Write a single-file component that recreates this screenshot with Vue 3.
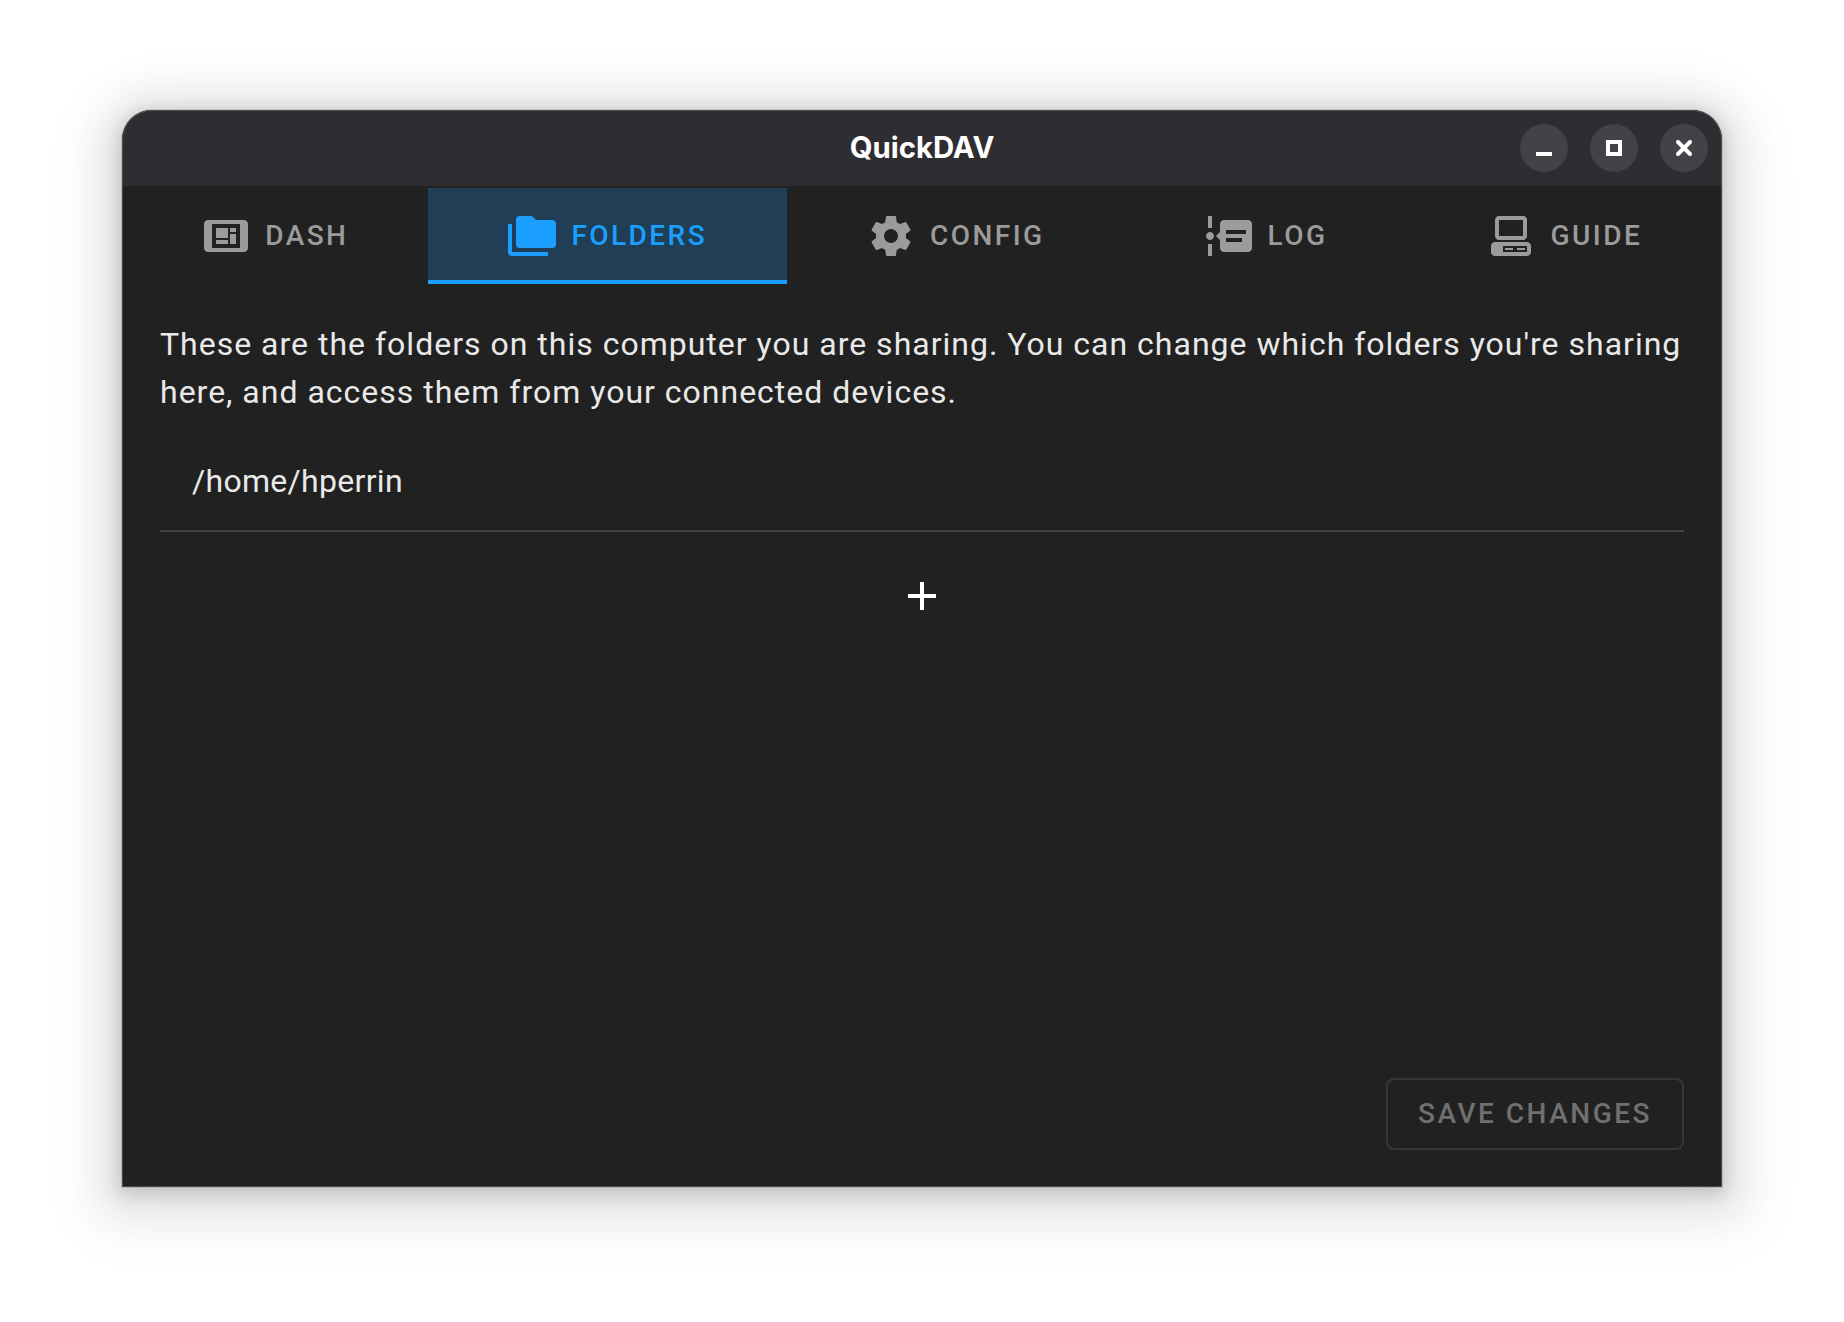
<script setup>
const tabs = [
  { label: 'Dash', icon: 'M7 8H13V13H7V8M7 14H13V16H7V14M14 8H17V10H14V8M14 11H17V16H14V11M21 4H3C1.9 4 1 4.9 1 6V18C1 19.1 1.9 20 3 20H21C22.11 20 23 19.11 23 18V6C23 4.9 22.11 4 21 4M19 18H5V6H19V18Z' },
  { label: 'Folders', active: true, icon: 'M22,4H14L12,2H6A2,2 0 0,0 4,4V16A2,2 0 0,0 6,18H22A2,2 0 0,0 24,16V6A2,2 0 0,0 22,4M2,6H0V20A2,2 0 0,0 2,22H20V20H2V6Z' },
  { label: 'Config', icon: 'M12,15.5A3.5,3.5 0 0,1 8.5,12A3.5,3.5 0 0,1 12,8.5A3.5,3.5 0 0,1 15.5,12A3.5,3.5 0 0,1 12,15.5M19.43,12.97C19.47,12.65 19.5,12.33 19.5,12C19.5,11.67 19.47,11.34 19.43,11L21.54,9.37C21.73,9.22 21.78,8.95 21.66,8.73L19.66,5.27C19.54,5.05 19.27,4.96 19.05,5.05L16.56,6.05C16.04,5.66 15.5,5.32 14.87,5.07L14.5,2.42C14.46,2.18 14.25,2 14,2H10C9.75,2 9.54,2.18 9.5,2.42L9.13,5.07C8.5,5.32 7.96,5.66 7.44,6.05L4.95,5.05C4.73,4.96 4.46,5.05 4.34,5.27L2.34,8.73C2.21,8.95 2.27,9.22 2.46,9.37L4.57,11C4.53,11.34 4.5,11.67 4.5,12C4.5,12.33 4.53,12.65 4.57,12.97L2.46,14.63C2.27,14.78 2.21,15.05 2.34,15.27L4.34,18.73C4.46,18.95 4.73,19.03 4.95,18.95L7.44,17.94C7.96,18.34 8.5,18.68 9.13,18.93L9.5,21.58C9.54,21.82 9.75,22 10,22H14C14.25,22 14.46,21.82 14.5,21.58L14.87,18.93C15.5,18.67 16.04,18.34 16.56,17.94L19.05,18.95C19.27,19.03 19.54,18.95 19.66,18.73L21.66,15.27C21.78,15.05 21.73,14.78 21.54,14.63L19.43,12.97Z' },
  { label: 'Log', icon: 'M4 2V8H2V2H4M2 22V16H4V22H2M5 12C5 13.11 4.11 14 3 14C1.9 14 1 13.11 1 12C1 10.9 1.9 10 3 10C4.11 10 5 10.9 5 12M24 6V18C24 19.11 23.11 20 22 20H10C8.9 20 8 19.11 8 18V14L6 12L8 10V6C8 4.89 8.9 4 10 4H22C23.11 4 24 4.89 24 6M19 13H11V15H19V13M21 9H11V11H21V9Z' },
  { label: 'Guide', icon: 'M6,2C4.89,2 4,2.89 4,4V12C4,13.11 4.89,14 6,14H18C19.11,14 20,13.11 20,12V4C20,2.89 19.11,2 18,2H6M6,4H18V12H6V4M4,15C2.89,15 2,15.89 2,17V20C2,21.11 2.89,22 4,22H20C21.11,22 22,21.11 22,20V17C22,15.89 21.11,15 20,15H4M8,17H20V20H8V17M9,18V19H13V18H9M15,18V19H19V18H15Z' },
]
const folders = ['/home/hperrin']
</script>

<template>
  <main class="desktop">
    <section class="window">
      <header class="titlebar">
        <h1 class="title">QuickDAV</h1>
        <div class="controls">
          <button class="control" aria-label="Minimize">
            <svg viewBox="0 0 16 16"><path d="M0 12H16V16H0Z" fill="#fff" /></svg>
          </button>
          <button class="control" aria-label="Maximize">
            <svg viewBox="0 0 16 16"><path d="M2 2H14V14H2Z" fill="none" stroke="#fff" stroke-width="4" /></svg>
          </button>
          <button class="control" aria-label="Close">
            <svg viewBox="0 0 16 16"><path d="M2 2L14 14M14 2L2 14" fill="none" stroke="#fff" stroke-width="4" stroke-linecap="round" /></svg>
          </button>
        </div>
      </header>
      <nav class="tabs">
        <button v-for="tab in tabs" :key="tab.label" class="tab" :class="{ active: tab.active }">
          <svg class="icon" viewBox="0 0 24 24"><path fill-rule="evenodd" :d="tab.icon" /></svg>
          <span class="label">{{ tab.label }}</span>
        </button>
      </nav>
      <div class="content">
        <p class="intro">These are the folders on this computer you are sharing. You can change which folders you're sharing here, and access them from your connected devices.</p>
        <ul class="list">
          <li v-for="folder in folders" :key="folder">{{ folder }}</li>
        </ul>
        <button class="add" aria-label="Add folder">
          <svg class="icon" viewBox="0 0 24 24"><path d="M19,13H13V19H11V13H5V11H11V5H13V11H19V13Z" /></svg>
        </button>
        <button class="save" disabled>Save changes</button>
      </div>
    </section>
  </main>
</template>

<style>
body {
  margin: 0;
  background: #fff;
}
</style>

<style scoped>
.desktop {
  box-sizing: border-box;
  width: 1844px;
  height: 1322px;
  padding: 110px 122px 135px;
  overflow: hidden;
  background: #fff;
  font-family: Roboto, sans-serif;
}
.window {
  display: flex;
  flex-direction: column;
  height: 1077px;
  border-radius: 30px 30px 0 0;
  background: #212121;
  outline: 1px solid rgba(130, 132, 130, 0.4);
  outline-offset: -1px;
  box-shadow:
    0 0 0 1px rgba(0, 0, 0, 0.1),
    0 4px 16px 4px rgba(0, 0, 0, 0.13),
    0 6px 40px 20px rgba(0, 0, 0, 0.09),
    0 12px 64px 32px rgba(0, 0, 0, 0.04);
}
button {
  margin: 0;
  border: 0;
  padding: 0;
  background: none;
  font: inherit;
}
.titlebar {
  display: grid;
  grid-template-columns: 1fr auto 1fr;
  align-items: center;
  height: 76px;
  padding: 0 14px;
  border-radius: 30px 30px 0 0;
  background: #2e2d32;
}
.title {
  grid-column: 2;
  margin: 0;
  color: #fff;
  font: 700 29.33px/40px Inter, sans-serif;
}
.controls {
  display: flex;
  justify-content: flex-end;
  gap: 22px;
}
.control {
  display: flex;
  align-items: center;
  justify-content: center;
  width: 48px;
  height: 48px;
  border-radius: 50%;
  background: #434247;
}
.control svg {
  width: 16px;
  height: 16px;
}
.tabs {
  display: flex;
  height: 96px;
  margin-top: 2px;
}
.tab {
  display: flex;
  flex: 1 0 auto;
  align-items: center;
  justify-content: center;
  gap: 15.5px;
  box-sizing: border-box;
  height: 96px;
  color: #9b9b9b;
  font-size: 28px;
  font-weight: 500;
  letter-spacing: 2.45px;
  text-transform: uppercase;
  padding: 0 48px;
}
.label {
  padding-bottom: 2px;
}
.tab.active {
  color: #1b9fff;
  background: #203f56;
  box-shadow: inset 0 -4px #1b9fff;
}
.icon {
  display: block;
  width: 48px;
  height: 48px;
  fill: currentColor;
}
.content {
  display: flex;
  flex: 1;
  flex-direction: column;
  padding: 36px 38px 37px;
}
.intro {
  margin: 0;
  color: #e9e9e9;
  font-size: 32px;
  line-height: 48px;
  letter-spacing: 1px;
}
.list {
  margin: 17px 0 0;
  padding: 0;
  list-style: none;
  color: #e9e9e9;
  font-size: 32px;
  line-height: 96px;
  letter-spacing: 0.3px;
}
.list li {
  padding: 0 32px 1px;
  border-bottom: 2px solid #424242;
}
.add {
  align-self: center;
  margin-top: 40px;
  color: #fff;
}
.save {
  align-self: flex-end;
  box-sizing: border-box;
  height: 72px;
  margin-top: auto;
  padding: 0 30px 2px;
  border: 2px solid #373737;
  border-radius: 8px;
  color: #707070;
  font-size: 28px;
  font-weight: 500;
  letter-spacing: 2.5px;
  text-transform: uppercase;
}
</style>
